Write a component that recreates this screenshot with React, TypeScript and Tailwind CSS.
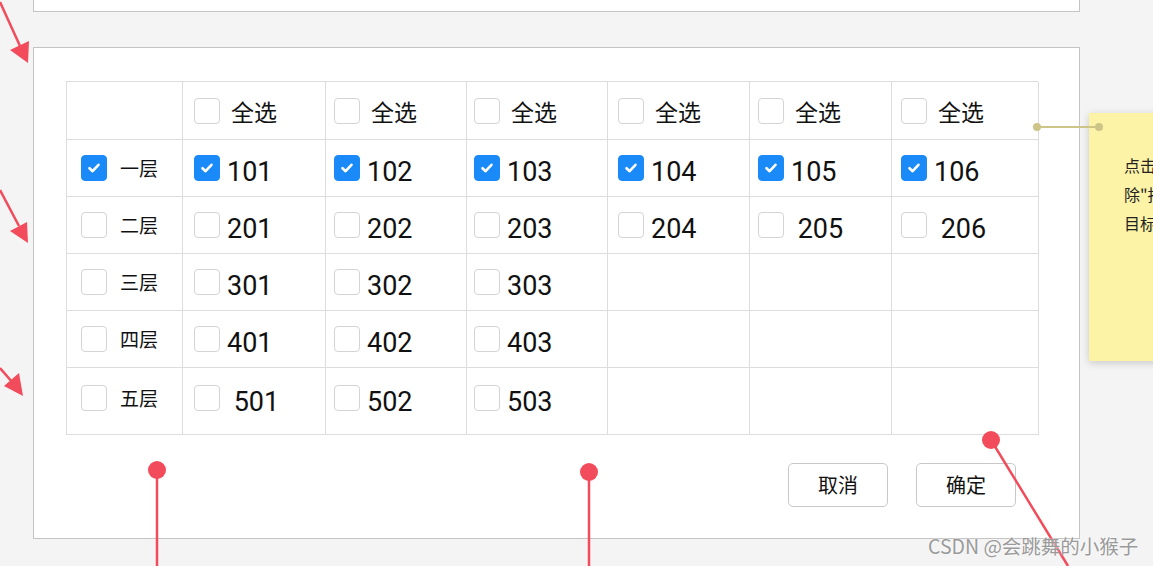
import React, { useState } from 'react';

const COL_PAD = ['pl-[11px]', 'pl-[8px]', 'pl-[7px]', 'pl-[10px]', 'pl-[8px]', 'pl-[9px]'];

const FLOORS = [
  { name: '一层', rooms: ['101', '102', '103', '104', '105', '106'] },
  { name: '二层', rooms: ['201', '202', '203', '204', ' 205', ' 206'] },
  { name: '三层', rooms: ['301', '302', '303'] },
  { name: '四层', rooms: ['401', '402', '403'] },
  { name: '五层', rooms: [' 501', '502', '503'] },
];

const CJK = { fontFamily: '"Noto Sans CJK SC", "Noto Sans", sans-serif' };
const NUM = { fontFamily: 'Roboto, "Noto Sans CJK SC", sans-serif' };

const Checkbox: React.FC<{ checked: boolean; onClick?: () => void }> = ({ checked, onClick }) => (
  <span
    onClick={onClick}
    className={`w-[26px] h-[26px] shrink-0 rounded-[4px] border flex items-center justify-center cursor-pointer ${
      checked ? 'bg-[#1a8af8] border-[#1a8af8]' : 'bg-white border-[#d4d4d4]'
    }`}
  >
    {checked && (
      <svg width="14" height="14" viewBox="0 0 14 14" fill="none">
        <path d="M2.5 7.2 L5.6 10.2 L11.5 3.8" stroke="#fff" strokeWidth="2.6" strokeLinecap="round" strokeLinejoin="round" />
      </svg>
    )}
  </span>
);

const App: React.FC = () => {
  const [checked, setChecked] = useState<Record<string, boolean>>({
    '一层': true, '101': true, '102': true, '103': true, '104': true, '105': true, '106': true,
  });
  const toggle = (k: string) => setChecked({ ...checked, [k]: !checked[k] });

  return (
    <div className="relative w-full h-[566px] bg-[#f4f4f4] overflow-hidden">
      {/* top panel (cut off) */}
      <div className="ml-[33px] w-[1047px] h-[12px] bg-white border border-t-0 border-[#c4c4c4]" />

      {/* main panel */}
      <div className="ml-[33px] mt-[35px] w-[1047px] h-[492px] bg-white border border-[#c4c4c4] pl-[32px] pt-[33px]">
        <div className="grid grid-cols-[116px_143px_141px_141px_142px_142px_147px] grid-rows-[58px_57px_57px_57px_57px_67px] w-[972px] border-l border-t border-[#dddddd]">
          {/* header */}
          <div className="border-r border-b border-[#dddddd]" />
          {COL_PAD.map((pad, i) => (
            <div key={i} className={`border-r border-b border-[#dddddd] flex items-center ${pad}`}>
              <Checkbox checked={!!checked['all' + i]} onClick={() => toggle('all' + i)} />
              <span className="ml-[11px] text-[23px] text-[#111] leading-none pt-[2px]" style={CJK}>全选</span>
            </div>
          ))}
          {FLOORS.map((f, r) => (
            <React.Fragment key={f.name}>
              <div className={`border-r border-b border-[#dddddd] flex items-center pl-[14px] ${r === 4 ? 'pb-[6px]' : ''}`}>
                <Checkbox checked={!!checked[f.name]} onClick={() => toggle(f.name)} />
                <span className="ml-[13px] text-[19px] text-[#111] leading-none pb-[2px]" style={CJK}>{f.name}</span>
              </div>
              {COL_PAD.map((pad, i) => {
                const room = f.rooms[i];
                return (
                  <div key={i} className={`border-r border-b border-[#dddddd] flex items-center ${pad} ${r === 4 ? 'pb-[6px]' : ''}`}>
                    {room && (
                      <>
                        <Checkbox checked={!!checked[room.trim()]} onClick={() => toggle(room.trim())} />
                        <span className="ml-[7px] text-[27px] text-[#111] leading-none whitespace-pre pt-[9px]" style={NUM}>{room}</span>
                      </>
                    )}
                  </div>
                );
              })}
            </React.Fragment>
          ))}
        </div>

        <div className="w-[972px] flex justify-end gap-[28px] pr-[22px] mt-[28px]">
          <button className="w-[100px] h-[44px] rounded-[5px] border border-[#c8c8c8] bg-white text-[20px] text-[#111]" style={CJK}>取消</button>
          <button className="w-[100px] h-[44px] rounded-[5px] border border-[#c8c8c8] bg-white text-[20px] text-[#111]" style={CJK}>确定</button>
        </div>
      </div>

      {/* sticky note */}
      <div className="absolute left-[1089px] top-[113px] w-[220px] h-[248px] bg-[#fdf3a7] shadow-[0_2px_8px_rgba(0,0,0,0.18)] pl-[35px] pt-[38px] text-[16px] leading-[29px] text-[#222] whitespace-nowrap" style={CJK}>
        <div>点击全选可以选中当前列</div>
        <div>除"批量"操作外，可选择</div>
        <div>目标楼层的房间</div>
      </div>

      {/* annotation overlay */}
      <svg className="absolute inset-0 pointer-events-none" width="1153" height="566" viewBox="0 0 1153 566">
        <line x1="1037" y1="127" x2="1099" y2="127" stroke="#cdc487" strokeWidth="2" />
        <circle cx="1037" cy="127" r="4" fill="#cdc487" />
        <circle cx="1099" cy="127" r="4" fill="#cdc487" />

        <g stroke="#f24b5b" strokeWidth="2.5" fill="#f24b5b">
          <line x1="0" y1="2" x2="20" y2="46" />
          <polygon points="28,63 10,50 29,41" stroke="none" />
          <line x1="0" y1="190" x2="19" y2="226" />
          <polygon points="28,243 10,231 27,222" stroke="none" />
          <line x1="0" y1="368" x2="13" y2="383" />
          <polygon points="23,396 4,386 19,373" stroke="none" />

          <line x1="157" y1="470" x2="157" y2="566" />
          <circle cx="157" cy="470" r="9" stroke="none" />
          <line x1="589" y1="472" x2="589" y2="566" />
          <circle cx="589" cy="472" r="9" stroke="none" />
          <line x1="991" y1="440" x2="1068" y2="566" />
          <circle cx="991" cy="440" r="9" stroke="none" />
        </g>
      </svg>

      {/* watermark */}
      <div className="absolute left-[928px] top-[536px] text-[19.5px] leading-none text-[#9a9a9a] whitespace-nowrap [text-shadow:0_0_2px_#fff]" style={{ fontFamily: '"Noto Sans CJK SC", "Liberation Sans", sans-serif' }}>
        CSDN @会跳舞的小猴子
      </div>
    </div>
  );
};

export default App;
